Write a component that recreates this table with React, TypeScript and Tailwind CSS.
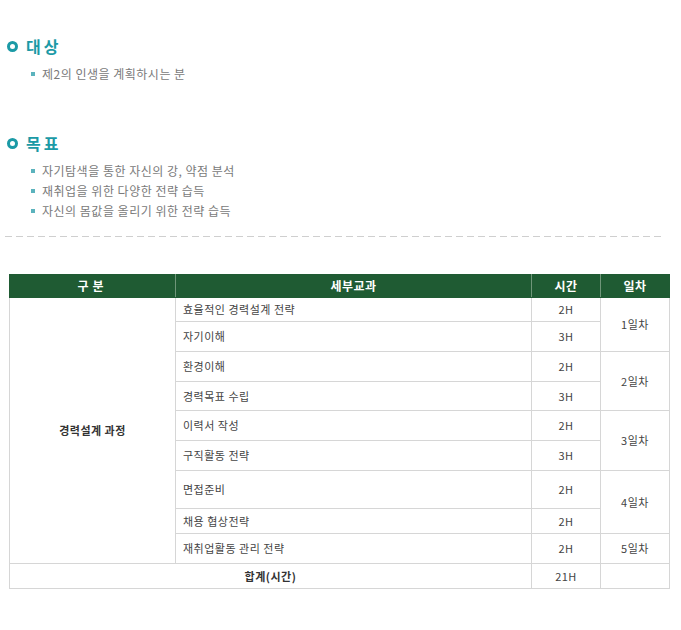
const rows = [
  { subject: '효율적인 경력설계 전략', hours: '2H', day: '1일차', span: 2, h: 'h-[24px]' },
  { subject: '자기이해', hours: '3H', h: 'h-[30px]' },
  { subject: '환경이해', hours: '2H', day: '2일차', span: 2, h: 'h-[30px]' },
  { subject: '경력목표 수립', hours: '3H', h: 'h-[29px]' },
  { subject: '이력서 작성', hours: '2H', day: '3일차', span: 2, h: 'h-[30px]' },
  { subject: '구직활동 전략', hours: '3H', h: 'h-[30px]' },
  { subject: '면접준비', hours: '2H', day: '4일차', span: 2, h: 'h-[38px]' },
  { subject: '채용 협상전략', hours: '2H', h: 'h-[25px]' },
  { subject: '재취업활동 관리 전략', hours: '2H', day: '5일차', span: 1, h: 'h-[30px]' },
];

function SectionTitle({ title }: { title: string }) {
  return (
    <h2 className="flex items-center h-[20px] text-[16px] font-bold tracking-[3px] text-[#1b9aa6]">
      <span className="w-[11px] h-[11px] rounded-full border-[3px] border-[#1b9aa6] ml-[1px] mr-[8px]" />
      {title}
    </h2>
  );
}

function Bullets({ items }: { items: string[] }) {
  return (
    <ul className="mt-[8px] pl-[25px]">
      {items.map((t) => (
        <li key={t} className="flex items-center h-[20px] text-[12px] tracking-[0.5px] text-[#7a7a7a]">
          <span className="w-[4px] h-[4px] bg-[#5bb3bd] mr-[7px]" />
          {t}
        </li>
      ))}
    </ul>
  );
}

export default function App() {
  return (
    <div className="bg-white min-h-[630px] pt-[36px] pl-[6px] font-['Noto_Sans_CJK_KR','Noto_Sans',sans-serif]">
      <SectionTitle title="대상" />
      <Bullets items={['제2의 인생을 계획하시는 분']} />

      <div className="mt-[49px]">
        <SectionTitle title="목표" />
        <Bullets items={['자기탐색을 통한 자신의 강, 약점 분석', '재취업을 위한 다양한 전략 습득', '자신의 몸값을 올리기 위한 전략 습득']} />
      </div>

      <div className="mt-[15px] ml-[-1px] w-[658px] h-px bg-[repeating-linear-gradient(to_right,#cfcfcf_0,#cfcfcf_7px,transparent_7px,transparent_11px)]" />

      <table className="mt-[37px] ml-[3px] w-[660px] border-collapse table-fixed text-[11px] tracking-[0.5px] text-[#444]">
        <colgroup>
          <col className="w-[166px]" />
          <col className="w-[356px]" />
          <col className="w-[69px]" />
          <col className="w-[69px]" />
        </colgroup>
        <thead>
          <tr className="h-[23px] bg-[#1f5b33] text-white text-[12px] font-bold">
            <th className="border border-[#1f5b33] border-r-[#6f9679] tracking-[4px]">구분</th>
            <th className="border border-[#1f5b33] border-r-[#6f9679]">세부교과</th>
            <th className="border border-[#1f5b33] border-r-[#6f9679]">시간</th>
            <th className="border border-[#1f5b33]">일차</th>
          </tr>
        </thead>
        <tbody>
          {rows.map((r, i) => (
            <tr key={r.subject} className={r.h}>
              {i === 0 && (
                <td rowSpan={rows.length} className="border border-[#d6d6d6] text-center font-bold text-[#333]">
                  경력설계 과정
                </td>
              )}
              <td className="border border-[#d6d6d6] pl-[7px]">{r.subject}</td>
              <td className="border border-[#d6d6d6] text-center">{r.hours}</td>
              {r.day && (
                <td rowSpan={r.span} className="border border-[#d6d6d6] text-center">
                  {r.day}
                </td>
              )}
            </tr>
          ))}
          <tr className="h-[25px]">
            <td colSpan={2} className="border border-[#d6d6d6] text-center font-bold text-[#333]">
              합계(시간)
            </td>
            <td className="border border-[#d6d6d6] text-center">21H</td>
            <td className="border border-[#d6d6d6]" />
          </tr>
        </tbody>
      </table>
    </div>
  );
}
